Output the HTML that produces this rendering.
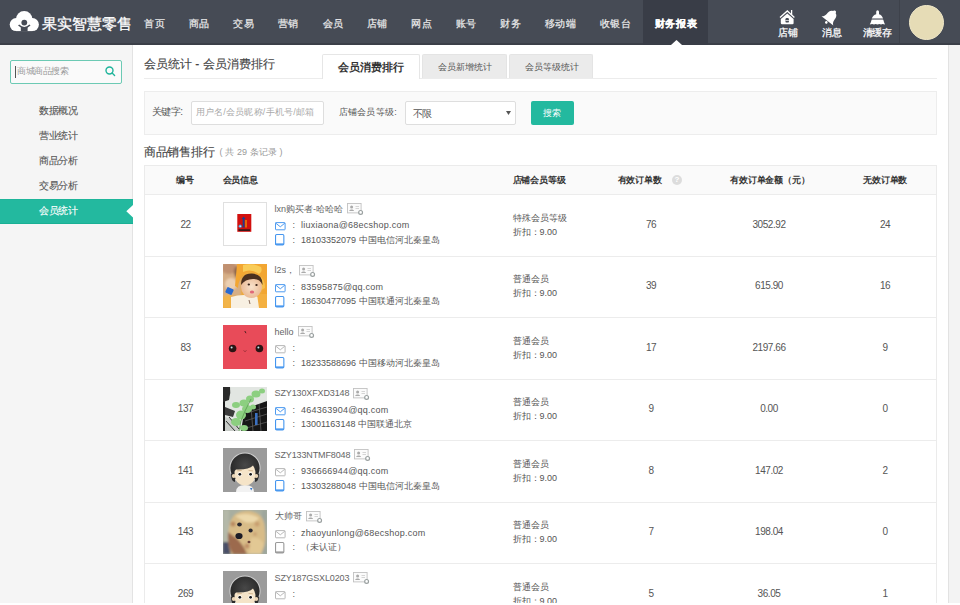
<!DOCTYPE html>
<html><head><meta charset="utf-8">
<style>
*{margin:0;padding:0;box-sizing:border-box}
html,body{width:960px;height:605px;overflow:hidden;background:#fff}
body{font-family:"Liberation Sans",sans-serif;position:relative;color:#555}
.a{position:absolute;white-space:nowrap}
#hdr{position:absolute;left:0;top:0;width:960px;height:45px;background:#464b55;border-bottom:2px solid #3b3f48}
.nav{position:absolute;top:17.5px;font-size:10px;line-height:12px;color:#ececec;letter-spacing:0.8px;-webkit-text-stroke:0.2px}
#side{position:absolute;left:0;top:45px;width:133px;height:558px;background:#f5f5f5;border-right:1px solid #e3e3e3}
.mi{position:absolute;left:39px;font-size:10px;line-height:12px;color:#555;letter-spacing:-0.4px;-webkit-text-stroke:0.12px}
#scroll{position:absolute;left:948px;top:45px;width:12px;height:558px;background:#f3f3f3;border-left:1px solid #e2e2e2}
#bot{position:absolute;left:0;top:603px;width:960px;height:2px;background:#fff}
.th{position:absolute;white-space:nowrap;font-size:9px;line-height:11px;font-weight:bold;color:#333;letter-spacing:-0.15px}
.td{position:absolute;white-space:nowrap;font-size:9px;line-height:12px;color:#555}
.c{text-align:center}
.nu{font-size:10px;letter-spacing:-0.45px}
.em{font-size:9px;color:#555;letter-spacing:0.24px}
.ph{color:#555}
.nm{position:absolute;white-space:nowrap;font-size:9px;line-height:12px;color:#666}
.cd{display:inline-block;vertical-align:top;margin-left:4px;margin-top:0.5px;letter-spacing:0}
.cd svg{display:block}
.ic{position:absolute}
.ic svg{display:block}
.av{position:absolute;width:44px;height:44px;overflow:hidden}
.av svg{display:block}
</style></head><body>
<div id="hdr">
  <svg class="a" style="left:0;top:0" width="45" height="40" viewBox="0 0 45 40">
    <circle cx="16.2" cy="24.6" r="6.5" fill="#fff"/><circle cx="24.2" cy="19.3" r="8.3" fill="#fff"/><circle cx="32.4" cy="24.6" r="6.5" fill="#fff"/><rect x="16" y="19" width="16.5" height="12.1" fill="#fff"/>
    <circle cx="24.3" cy="22.6" r="2.9" fill="#464b55"/><path d="M18.6 25 Q24.3 30.5 30 25" fill="none" stroke="#464b55" stroke-width="1.6"/><rect x="20.8" y="27.3" width="6.8" height="4" fill="#464b55"/>
  </svg>
  <div class="a" style="left:41.5px;top:14.5px;font-size:15px;line-height:18px;color:#fff;-webkit-text-stroke:0.3px">果实智慧零售</div>
  <div class="a" style="left:643px;top:0;width:65px;height:45px;background:#393d47"></div>
  <svg class="a" style="left:671px;top:40px" width="11" height="5" viewBox="0 0 11 5"><path d="M0 5 L5.5 0 L11 5Z" fill="#fff"/></svg>
  <div class="nav" style="left:144px">首页</div>
  <div class="nav" style="left:188.5px">商品</div>
  <div class="nav" style="left:233px">交易</div>
  <div class="nav" style="left:277.5px">营销</div>
  <div class="nav" style="left:322.5px">会员</div>
  <div class="nav" style="left:366.5px">店铺</div>
  <div class="nav" style="left:411px">网点</div>
  <div class="nav" style="left:455.5px">账号</div>
  <div class="nav" style="left:500px">财务</div>
  <div class="nav" style="left:544.5px">移动端</div>
  <div class="nav" style="left:599.5px">收银台</div>
  <div class="nav" style="left:654.5px;font-weight:bold;color:#fff">财务报表</div>
  <!-- right icons -->
  <svg class="a" style="left:770px;top:5px" width="120" height="22" viewBox="770 5 120 22">
    <path d="M780 17.6 L787.3 11 L794.4 17.6" fill="none" stroke="#fff" stroke-width="1.3"/>
    <path d="M791.6 10 L791.6 14.8" stroke="#fff" stroke-width="1.3"/>
    <path d="M787.3 13.4 L793.6 19 L793.6 23 Q793.6 24.2 792.4 24.2 L782 24.2 Q780.8 24.2 780.8 23 L780.8 19 Z" fill="#fff"/>
    <rect x="785.5" y="18" width="3.4" height="4.6" rx="1.2" fill="#464b55"/>
    <rect x="785.5" y="20" width="3.4" height="0.7" fill="#fff"/>
    <g transform="rotate(38 830.5 17)">
      <path d="M830.5 9.2 C831.8 9.2 832.2 10 832.2 10.8 C835 11.8 835.2 14.5 835.3 17 C835.4 19.5 836.5 21 838 22 L823 22 C824.5 21 825.6 19.5 825.7 17 C825.8 14.5 826 11.8 828.8 10.8 C828.8 10 829.2 9.2 830.5 9.2 Z" fill="#fff"/>
      <path d="M826 23 Q830.5 24.6 835 23" fill="none" stroke="#464b55" stroke-width="1.1"/>
      <circle cx="830.5" cy="23.8" r="1.3" fill="#fff"/>
    </g>
    <path d="M876.2 14.3 L876.2 11.8 Q876.2 10.3 877.6 10.3 Q879 10.3 879 11.8 L879 14.3 Q882 15 883 18.5 L871.8 18.5 Q873 15 876.2 14.3 Z" fill="#fff"/>
    <rect x="871.8" y="18.6" width="11.2" height="0.9" fill="#9a9ca2"/>
    <path d="M871.6 19.7 L883.3 19.7 Q884 22.5 885 24.5 Q882.5 23.8 881 24.4 Q879.5 23.8 877.5 24.4 Q875.5 23.8 874 24.4 Q872 23.8 869.8 24.5 Q871 22.5 871.6 19.7 Z" fill="#fff"/>
  </svg>
  <div class="a" style="left:778px;top:26.5px;font-size:10px;line-height:11px;color:#fff;letter-spacing:-0.4px;-webkit-text-stroke:0.25px">店铺</div>
  <div class="a" style="left:822px;top:26.5px;font-size:10px;line-height:11px;color:#fff;letter-spacing:-0.4px;-webkit-text-stroke:0.25px">消息</div>
  <div class="a" style="left:863px;top:26.5px;font-size:10px;line-height:11px;color:#fff;letter-spacing:-0.6px;-webkit-text-stroke:0.25px">清缓存</div>
  <div class="a" style="left:899px;top:0;width:1px;height:43px;background:#3e424b"></div>
  <div class="a" style="left:908.5px;top:4.5px;width:35px;height:35px;border-radius:50%;background:#e6dcb6;border:1px solid #f0e8c8"></div>
</div>

<div id="side">
  <div class="a" style="left:10px;top:14.5px;width:111.5px;height:24.5px;border:1.5px solid #6ccab4;border-radius:2px;background:#fafafa"></div>
  <div class="a" style="left:15px;top:20.5px;width:1px;height:12px;background:#555"></div>
  <div class="a" style="left:17px;top:19.5px;font-size:9px;line-height:12px;color:#999;letter-spacing:-0.5px">商城商品搜索</div>
  <svg class="a" style="left:104px;top:20px" width="13" height="13" viewBox="0 0 13 13">
    <circle cx="5.5" cy="5.5" r="3.5" fill="none" stroke="#1fb49b" stroke-width="1.4"/>
    <path d="M8.1 8.1 L10.6 10.6" stroke="#1fb49b" stroke-width="1.4" stroke-linecap="round"/>
  </svg>
  <div class="mi" style="top:60px">数据概况</div>
  <div class="mi" style="top:85px">营业统计</div>
  <div class="mi" style="top:110px">商品分析</div>
  <div class="mi" style="top:135px">交易分析</div>
  <div class="a" style="left:0;top:154px;width:133px;height:24.5px;background:#23b99f;border-top:1px solid #1eb59a;border-bottom:1px solid #19b094"></div>
  <svg class="a" style="left:126.3px;top:160.4px" width="7" height="12.6" viewBox="0 0 7 12.6"><path d="M7 0 L0.3 6.3 L7 12.6Z" fill="#fff"/></svg>
  <div class="mi" style="top:160px;color:#fff">会员统计</div>
</div>

<!-- main -->
<div class="a" style="left:144px;top:56.5px;font-size:12px;line-height:14px;color:#444;-webkit-text-stroke:0.12px">会员统计 - 会员消费排行</div>
<div class="a" style="left:144px;top:78px;width:793px;height:1px;background:#ececec"></div>
<div class="a" style="left:322px;top:54px;width:98px;height:25px;background:#fff;border:1px solid #e6e6e6;border-bottom:none;border-radius:2px 2px 0 0"></div>
<div class="a" style="left:338px;top:61px;font-size:11px;line-height:13px;color:#333;font-weight:bold">会员消费排行</div>
<div class="a" style="left:422px;top:54px;width:84.5px;height:24px;background:#ebebeb;border:1px solid #e4e4e4;border-bottom:none;border-radius:2px 2px 0 0"></div>
<div class="a" style="left:437.5px;top:62px;font-size:9px;line-height:11px;color:#555">会员新增统计</div>
<div class="a" style="left:508.5px;top:54px;width:84.5px;height:24px;background:#ebebeb;border:1px solid #e4e4e4;border-bottom:none;border-radius:2px 2px 0 0"></div>
<div class="a" style="left:525px;top:62px;font-size:9px;line-height:11px;color:#555">会员等级统计</div>

<div class="a" style="left:144px;top:91px;width:793px;height:44px;background:#fafafa;border:1px solid #ededed"></div>
<div class="a" style="left:151.5px;top:106px;font-size:10px;line-height:12px;color:#555;letter-spacing:-0.4px">关键字:</div>
<div class="a" style="left:190.5px;top:101px;width:133.5px;height:24px;background:#fff;border:1px solid #dedede;border-radius:2px"></div>
<div class="a" style="left:195.5px;top:106px;font-size:9px;line-height:12px;color:#aaa;letter-spacing:0.23px">用户名/会员昵称/手机号/邮箱</div>
<div class="a" style="left:338.5px;top:106px;font-size:9px;line-height:12px;color:#555;letter-spacing:0.28px">店铺会员等级:</div>
<div class="a" style="left:404.5px;top:101px;width:111px;height:24px;background:#fff;border:1px solid #dedede;border-radius:2px"></div>
<div class="a" style="left:412.5px;top:107.5px;font-size:10px;line-height:12px;color:#555;letter-spacing:-1px">不限</div>
<svg class="a" style="left:505.5px;top:111px" width="5" height="4" viewBox="0 0 5 4"><path d="M0 0 L5 0 L2.5 4Z" fill="#555"/></svg>
<div class="a" style="left:530.5px;top:101px;width:43px;height:24px;background:#23b99f;border-radius:2px"></div>
<div class="a" style="left:542.5px;top:106.5px;font-size:9px;line-height:12px;color:#fff;letter-spacing:0.6px">搜索</div>

<div class="a" style="left:144px;top:145px;font-size:12px;line-height:14px;color:#444;letter-spacing:-0.3px;-webkit-text-stroke:0.12px">商品销售排行</div>
<div class="a" style="left:219.5px;top:147px;font-size:9px;line-height:11px;color:#999;letter-spacing:0.1px">( 共 29 条记录 )</div>

<div id="tbl">
<div class="a" style="left:144px;top:165px;width:793px;height:439px;border:1px solid #ebebeb;border-bottom:none"></div>
<div class="a" style="left:145px;top:166px;width:791px;height:28px;background:#fafafa"></div>
<div class="th" style="left:175.8px;top:174.5px">编号</div>
<div class="th" style="left:222.5px;top:174.5px">会员信息</div>
<div class="th" style="left:512.5px;top:174.5px">店铺会员等级</div>
<div class="th" style="left:617.5px;top:174.5px">有效订单数</div>
<div class="a" style="left:672px;top:174.5px;width:10px;height:10px;border-radius:50%;background:#dcdcdc;color:#fff;font-size:8px;line-height:10px;text-align:center;font-weight:bold">?</div>
<div class="th" style="left:730px;top:174.5px">有效订单金额（元）</div>
<div class="th" style="left:863px;top:174.5px">无效订单数</div>
<div class="a" style="left:145px;top:194.0px;width:791px;height:1px;background:#ececec"></div>
<div class="td c nu" style="left:145px;width:81px;top:218.8px">22</div>
<div class="av" style="left:222.5px;top:202.0px"><svg width="44" height="44" viewBox="0 0 44 44"><rect x="0.5" y="0.5" width="43" height="43" fill="#fff" stroke="#e0e0e0"/>
<rect x="14.3" y="12" width="14" height="17.8" fill="#d2100e"/>
<path d="M20.6 14.6 L22.6 17 L21.5 17 L21.5 25.5 L19.7 25.5 L19.7 17 L18.6 17 Z" fill="#1b3f8f"/>
<path d="M22.5 18 L23.5 18 L23.5 25.5 L22.5 25.5Z" fill="#f5c000"/>
<circle cx="17.2" cy="24.2" r="1.6" fill="#3aa0e8"/><circle cx="17.2" cy="24.2" r="0.7" fill="#fff"/>
<rect x="15.5" y="27.3" width="11.5" height="1.6" fill="#2a1a1a"/></svg></div>
<div class="nm" style="left:274.5px;top:202.5px;letter-spacing:0">lxn购买者-哈哈哈<span class="cd"><svg width="17" height="12" viewBox="0 0 17 12"><rect x="0.5" y="0.5" width="13.6" height="9.4" fill="#fbfbfb" stroke="#c2c2c2" stroke-width="0.9"/><circle cx="4.6" cy="3.9" r="1.5" fill="#aaa"/><path d="M2.2 8 C2.4 6 6.8 6 7 8Z" fill="#aaa"/><rect x="8.5" y="3" width="3.5" height="0.8" fill="#ccc"/><rect x="8.5" y="5.2" width="3.5" height="0.8" fill="#ccc"/><circle cx="13.6" cy="9.4" r="1.9" fill="#fff" stroke="#9aa0a0" stroke-width="1.2"/></svg></span></div>
<div class="ic" style="left:275px;top:222.0px"><svg width="11" height="9" viewBox="0 0 11 9"><rect x="0.5" y="0.6" width="9.6" height="7.2" rx="0.6" fill="none" stroke="#4596ef" stroke-width="0.95"/><path d="M0.7 1.1 L5.3 4.8 L9.9 1.1" fill="none" stroke="#4596ef" stroke-width="0.95"/></svg></div>
<div class="td" style="left:292.5px;top:219.0px">:</div>
<div class="td em" style="left:301px;top:219.0px">liuxiaona@68ecshop.com</div>
<div class="ic" style="left:275px;top:234.0px"><svg width="10" height="12" viewBox="0 0 10 12"><rect x="0.55" y="0.55" width="8.3" height="10.3" rx="1.1" fill="none" stroke="#4596ef" stroke-width="1.1"/><rect x="0.55" y="9.4" width="8.3" height="1.5" fill="#4596ef"/></svg></div>
<div class="td" style="left:292.5px;top:233.5px">:</div>
<div class="td ph" style="left:301px;top:233.5px">18103352079 中国电信河北秦皇岛</div>
<div class="td" style="left:512.5px;top:211.5px">特殊会员等级</div>
<div class="td" style="left:512.5px;top:225.5px">折扣：9.00</div>
<div class="td c nu" style="left:601px;width:100px;top:218.8px">76</div>
<div class="td c nu" style="left:719px;width:100px;top:218.8px">3052.92</div>
<div class="td c nu" style="left:835px;width:100px;top:218.8px">24</div>
<div class="a" style="left:145px;top:255.5px;width:791px;height:1px;background:#ececec"></div>
<div class="td c nu" style="left:145px;width:81px;top:280.3px">27</div>
<div class="av" style="left:222.5px;top:263.5px"><svg width="44" height="44" viewBox="0 0 44 44"><defs>
<filter id="bl2" x="-20%" y="-20%" width="140%" height="140%"><feGaussianBlur stdDeviation="1.3"/></filter>
<filter id="bl2b" x="-20%" y="-20%" width="140%" height="140%"><feGaussianBlur stdDeviation="0.5"/></filter>
<radialGradient id="fc2" cx="0.5" cy="0.5" r="0.6"><stop offset="0" stop-color="#f8e2cc"/><stop offset="1" stop-color="#e8b48c"/></radialGradient></defs>
<rect width="44" height="44" fill="#eeaa3a"/>
<g filter="url(#bl2)">
<rect x="-2" y="-2" width="20" height="34" fill="#d6ae86"/>
<ellipse cx="6" cy="4" rx="8" ry="6" fill="#c09070"/>
<ellipse cx="15" cy="8" rx="4" ry="6" fill="#8a6448"/>
<ellipse cx="8" cy="20" rx="6" ry="6" fill="#ecd0b2"/>
<path d="M0 32 L8 30 L8 44 L0 44Z" fill="#f2b448"/>
</g>
<g filter="url(#bl2b)">
<path d="M14 0 L44 0 L44 44 L38 44 L40 20 Q36 6 24 8 Q16 12 15 24 L12 22Z" fill="#f2a632"/>
<path d="M20 1 Q30 -1 38 3 Q40 8 36 10 Q28 4 20 8Z" fill="#f9cc58"/>
<path d="M36 12 Q42 14 42 24 L38 26Z" fill="#f7c04c"/>
<path d="M8 33 Q20 29 36 33 L38 44 L8 44Z" fill="#f8f0e2"/>
<path d="M34 30 L44 30 L44 44 L36 44Z" fill="#f4b040"/>
</g>
<ellipse cx="28.5" cy="23" rx="10.5" ry="11" fill="url(#fc2)"/>
<path d="M18 21 Q18 9 29 9.5 Q40 10 39.5 21 Q37 14.5 30 15 Q22 15 18 21Z" fill="#4a3020"/>
<ellipse cx="25.8" cy="20.5" rx="1.2" ry="0.9" fill="#3a2418"/><ellipse cx="33.5" cy="21" rx="1.2" ry="0.9" fill="#3a2418"/>
<ellipse cx="29" cy="28" rx="2.2" ry="1.6" fill="#e06878"/>
<rect x="3" y="24" width="7" height="6" rx="1" transform="rotate(25 6.5 27)" fill="#2a6ad0"/>
<path d="M26 36 L27 40" stroke="#6a4a3a" stroke-width="0.8"/>
</svg></div>
<div class="nm" style="left:274.5px;top:264.0px;letter-spacing:0">l2s，<span class="cd"><svg width="17" height="12" viewBox="0 0 17 12"><rect x="0.5" y="0.5" width="13.6" height="9.4" fill="#fbfbfb" stroke="#c2c2c2" stroke-width="0.9"/><circle cx="4.6" cy="3.9" r="1.5" fill="#aaa"/><path d="M2.2 8 C2.4 6 6.8 6 7 8Z" fill="#aaa"/><rect x="8.5" y="3" width="3.5" height="0.8" fill="#ccc"/><rect x="8.5" y="5.2" width="3.5" height="0.8" fill="#ccc"/><circle cx="13.6" cy="9.4" r="1.9" fill="#fff" stroke="#9aa0a0" stroke-width="1.2"/></svg></span></div>
<div class="ic" style="left:275px;top:283.5px"><svg width="11" height="9" viewBox="0 0 11 9"><rect x="0.5" y="0.6" width="9.6" height="7.2" rx="0.6" fill="none" stroke="#4596ef" stroke-width="0.95"/><path d="M0.7 1.1 L5.3 4.8 L9.9 1.1" fill="none" stroke="#4596ef" stroke-width="0.95"/></svg></div>
<div class="td" style="left:292.5px;top:280.5px">:</div>
<div class="td em" style="left:301px;top:280.5px">83595875@qq.com</div>
<div class="ic" style="left:275px;top:295.5px"><svg width="10" height="12" viewBox="0 0 10 12"><rect x="0.55" y="0.55" width="8.3" height="10.3" rx="1.1" fill="none" stroke="#4596ef" stroke-width="1.1"/><rect x="0.55" y="9.4" width="8.3" height="1.5" fill="#4596ef"/></svg></div>
<div class="td" style="left:292.5px;top:295.0px">:</div>
<div class="td ph" style="left:301px;top:295.0px">18630477095 中国联通河北秦皇岛</div>
<div class="td" style="left:512.5px;top:273.0px">普通会员</div>
<div class="td" style="left:512.5px;top:287.0px">折扣：9.00</div>
<div class="td c nu" style="left:601px;width:100px;top:280.3px">39</div>
<div class="td c nu" style="left:719px;width:100px;top:280.3px">615.90</div>
<div class="td c nu" style="left:835px;width:100px;top:280.3px">16</div>
<div class="a" style="left:145px;top:317.0px;width:791px;height:1px;background:#ececec"></div>
<div class="td c nu" style="left:145px;width:81px;top:341.8px">83</div>
<div class="av" style="left:222.5px;top:325.0px"><svg width="44" height="44" viewBox="0 0 44 44"><rect width="44" height="44" fill="#e84b59"/>
<circle cx="9.6" cy="23.5" r="3.8" fill="#2a1414"/><circle cx="8.6" cy="22.4" r="1" fill="#bfe8f0"/>
<circle cx="36.4" cy="23.5" r="3.8" fill="#2a1414"/><circle cx="35.4" cy="22.4" r="1" fill="#bfe8f0"/>
<path d="M20.5 25.5 Q21.3 27 22 25.8 Q22.7 27 23.5 25.5" fill="none" stroke="#6a2024" stroke-width="0.6"/>
<path d="M21.8 6 L23 8.2" stroke="#3a1a1a" stroke-width="0.9"/></svg></div>
<div class="nm" style="left:274.5px;top:325.5px;letter-spacing:0">hello<span class="cd"><svg width="17" height="12" viewBox="0 0 17 12"><rect x="0.5" y="0.5" width="13.6" height="9.4" fill="#fbfbfb" stroke="#c2c2c2" stroke-width="0.9"/><circle cx="4.6" cy="3.9" r="1.5" fill="#aaa"/><path d="M2.2 8 C2.4 6 6.8 6 7 8Z" fill="#aaa"/><rect x="8.5" y="3" width="3.5" height="0.8" fill="#ccc"/><rect x="8.5" y="5.2" width="3.5" height="0.8" fill="#ccc"/><circle cx="13.6" cy="9.4" r="1.9" fill="#fff" stroke="#9aa0a0" stroke-width="1.2"/></svg></span></div>
<div class="ic" style="left:275px;top:345.0px"><svg width="11" height="9" viewBox="0 0 11 9"><rect x="0.5" y="0.6" width="9.6" height="7.2" rx="0.6" fill="none" stroke="#b4b4b4" stroke-width="0.95"/><path d="M0.7 1.1 L5.3 4.8 L9.9 1.1" fill="none" stroke="#b4b4b4" stroke-width="0.95"/></svg></div>
<div class="td" style="left:292.5px;top:342.0px">:</div>
<div class="ic" style="left:275px;top:357.0px"><svg width="10" height="12" viewBox="0 0 10 12"><rect x="0.55" y="0.55" width="8.3" height="10.3" rx="1.1" fill="none" stroke="#4596ef" stroke-width="1.1"/><rect x="0.55" y="9.4" width="8.3" height="1.5" fill="#4596ef"/></svg></div>
<div class="td" style="left:292.5px;top:356.5px">:</div>
<div class="td ph" style="left:301px;top:356.5px">18233588696 中国移动河北秦皇岛</div>
<div class="td" style="left:512.5px;top:334.5px">普通会员</div>
<div class="td" style="left:512.5px;top:348.5px">折扣：9.00</div>
<div class="td c nu" style="left:601px;width:100px;top:341.8px">17</div>
<div class="td c nu" style="left:719px;width:100px;top:341.8px">2197.66</div>
<div class="td c nu" style="left:835px;width:100px;top:341.8px">9</div>
<div class="a" style="left:145px;top:378.5px;width:791px;height:1px;background:#ececec"></div>
<div class="td c nu" style="left:145px;width:81px;top:403.3px">137</div>
<div class="av" style="left:222.5px;top:386.5px"><svg width="44" height="44" viewBox="0 0 44 44"><defs><filter id="bl4" x="-20%" y="-20%" width="140%" height="140%"><feGaussianBlur stdDeviation="0.7"/></filter></defs>
<rect width="44" height="44" fill="#e2e6e2"/>
<g filter="url(#bl4)">
<rect x="0" y="0" width="2" height="44" fill="#181818"/>
<path d="M0 0 L7 0 Q8 6 6 13 L0 15Z" fill="#2a2a2a"/>
<path d="M2 20 L12 24 L10 30 L2 28Z" fill="#3a3a3a"/>
<path d="M2 30 L14 34 L16 44 L2 44Z" fill="#c8ccc8"/>
<path d="M3 34 L12 44 M6 30 L16 42" stroke="#333" stroke-width="1"/>
<path d="M22 22 L44 14 L44 44 L18 44 L20 32Z" fill="#161616"/>
<path d="M24 26 L44 20 M22 34 L44 27 M20 42 L44 35 M28 20 L30 44 M36 17 L38 44" stroke="#666" stroke-width="0.7"/>
<rect x="32" y="26" width="2.6" height="12" fill="#3a70c0"/>
</g>
<g fill="#8ccf80" filter="url(#bl4)">
<ellipse cx="33" cy="7" rx="4.5" ry="3.5"/><ellipse cx="39" cy="4" rx="3" ry="2.5"/><ellipse cx="27" cy="12" rx="4" ry="3.5"/>
<ellipse cx="21" cy="16" rx="4.5" ry="3.5"/><ellipse cx="13" cy="18" rx="4" ry="3"/><ellipse cx="24" cy="22" rx="5" ry="4"/>
<ellipse cx="18" cy="28" rx="5" ry="4.5"/><ellipse cx="13" cy="35" rx="5" ry="4"/><ellipse cx="21" cy="41" rx="4" ry="3"/><ellipse cx="30" cy="20" rx="3" ry="2.5"/>
</g>
<path d="M28 12 L22 24 L18 34 L16 44" stroke="#5a9a50" stroke-width="0.8" fill="none"/>
</svg></div>
<div class="nm" style="left:274.5px;top:387.0px;letter-spacing:-0.12px">SZY130XFXD3148<span class="cd"><svg width="17" height="12" viewBox="0 0 17 12"><rect x="0.5" y="0.5" width="13.6" height="9.4" fill="#fbfbfb" stroke="#c2c2c2" stroke-width="0.9"/><circle cx="4.6" cy="3.9" r="1.5" fill="#aaa"/><path d="M2.2 8 C2.4 6 6.8 6 7 8Z" fill="#aaa"/><rect x="8.5" y="3" width="3.5" height="0.8" fill="#ccc"/><rect x="8.5" y="5.2" width="3.5" height="0.8" fill="#ccc"/><circle cx="13.6" cy="9.4" r="1.9" fill="#fff" stroke="#9aa0a0" stroke-width="1.2"/></svg></span></div>
<div class="ic" style="left:275px;top:406.5px"><svg width="11" height="9" viewBox="0 0 11 9"><rect x="0.5" y="0.6" width="9.6" height="7.2" rx="0.6" fill="none" stroke="#4596ef" stroke-width="0.95"/><path d="M0.7 1.1 L5.3 4.8 L9.9 1.1" fill="none" stroke="#4596ef" stroke-width="0.95"/></svg></div>
<div class="td" style="left:292.5px;top:403.5px">:</div>
<div class="td em" style="left:301px;top:403.5px">464363904@qq.com</div>
<div class="ic" style="left:275px;top:418.5px"><svg width="10" height="12" viewBox="0 0 10 12"><rect x="0.55" y="0.55" width="8.3" height="10.3" rx="1.1" fill="none" stroke="#4596ef" stroke-width="1.1"/><rect x="0.55" y="9.4" width="8.3" height="1.5" fill="#4596ef"/></svg></div>
<div class="td" style="left:292.5px;top:418.0px">:</div>
<div class="td ph" style="left:301px;top:418.0px">13001163148 中国联通北京</div>
<div class="td" style="left:512.5px;top:396.0px">普通会员</div>
<div class="td" style="left:512.5px;top:410.0px">折扣：9.00</div>
<div class="td c nu" style="left:601px;width:100px;top:403.3px">9</div>
<div class="td c nu" style="left:719px;width:100px;top:403.3px">0.00</div>
<div class="td c nu" style="left:835px;width:100px;top:403.3px">0</div>
<div class="a" style="left:145px;top:440.0px;width:791px;height:1px;background:#ececec"></div>
<div class="td c nu" style="left:145px;width:81px;top:464.8px">141</div>
<div class="av" style="left:222.5px;top:448.0px"><svg width="44" height="44" viewBox="0 0 44 44"><defs><radialGradient id="hr5" cx="0.5" cy="0.4" r="0.55"><stop offset="0" stop-color="#484848"/><stop offset="1" stop-color="#262626"/></radialGradient></defs>
<rect width="44" height="44" fill="#9b9b9b"/>
<path d="M13 44 Q13 37 22 37 Q31 37 31 44Z" fill="#f2f2f2"/>
<path d="M27 40 L29.5 40 L28.2 42.5Z" fill="#3a78c8"/>
<circle cx="22" cy="20" r="15.6" fill="#d0d0d0"/>
<circle cx="22" cy="20" r="14.6" fill="url(#hr5)"/>
<path d="M8 26 Q8 33 12 34 L12 24Z" fill="#2a2a2a"/><path d="M36 26 Q36 33 32 34 L32 24Z" fill="#2a2a2a"/>
<circle cx="10.8" cy="28" r="2" fill="#ead4b4"/><circle cx="33.2" cy="28" r="2" fill="#ead4b4"/>
<path d="M11.5 24 Q11.5 37 22 37.5 Q32.5 37 32.5 24 Q32 20 30 17.5 Q26 22 13 21.5 Q11.5 22.5 11.5 24Z" fill="#f5e4c8"/>
<circle cx="16.8" cy="26.3" r="2.1" fill="#fff"/><circle cx="16.8" cy="26.3" r="1.4" fill="#151515"/>
<circle cx="27.6" cy="26.3" r="2.1" fill="#fff"/><circle cx="27.6" cy="26.3" r="1.4" fill="#151515"/>
<path d="M14.2 22.8 L18.8 22.4" stroke="#c8a880" stroke-width="0.7"/><path d="M25.5 22.4 L30 22.8" stroke="#c8a880" stroke-width="0.7"/>
</svg></div>
<div class="nm" style="left:274.5px;top:448.5px;letter-spacing:-0.12px">SZY133NTMF8048<span class="cd"><svg width="17" height="12" viewBox="0 0 17 12"><rect x="0.5" y="0.5" width="13.6" height="9.4" fill="#fbfbfb" stroke="#c2c2c2" stroke-width="0.9"/><circle cx="4.6" cy="3.9" r="1.5" fill="#aaa"/><path d="M2.2 8 C2.4 6 6.8 6 7 8Z" fill="#aaa"/><rect x="8.5" y="3" width="3.5" height="0.8" fill="#ccc"/><rect x="8.5" y="5.2" width="3.5" height="0.8" fill="#ccc"/><circle cx="13.6" cy="9.4" r="1.9" fill="#fff" stroke="#9aa0a0" stroke-width="1.2"/></svg></span></div>
<div class="ic" style="left:275px;top:468.0px"><svg width="11" height="9" viewBox="0 0 11 9"><rect x="0.5" y="0.6" width="9.6" height="7.2" rx="0.6" fill="none" stroke="#b4b4b4" stroke-width="0.95"/><path d="M0.7 1.1 L5.3 4.8 L9.9 1.1" fill="none" stroke="#b4b4b4" stroke-width="0.95"/></svg></div>
<div class="td" style="left:292.5px;top:465.0px">:</div>
<div class="td em" style="left:301px;top:465.0px">936666944@qq.com</div>
<div class="ic" style="left:275px;top:480.0px"><svg width="10" height="12" viewBox="0 0 10 12"><rect x="0.55" y="0.55" width="8.3" height="10.3" rx="1.1" fill="none" stroke="#4596ef" stroke-width="1.1"/><rect x="0.55" y="9.4" width="8.3" height="1.5" fill="#4596ef"/></svg></div>
<div class="td" style="left:292.5px;top:479.5px">:</div>
<div class="td ph" style="left:301px;top:479.5px">13303288048 中国电信河北秦皇岛</div>
<div class="td" style="left:512.5px;top:457.5px">普通会员</div>
<div class="td" style="left:512.5px;top:471.5px">折扣：9.00</div>
<div class="td c nu" style="left:601px;width:100px;top:464.8px">8</div>
<div class="td c nu" style="left:719px;width:100px;top:464.8px">147.02</div>
<div class="td c nu" style="left:835px;width:100px;top:464.8px">2</div>
<div class="a" style="left:145px;top:501.5px;width:791px;height:1px;background:#ececec"></div>
<div class="td c nu" style="left:145px;width:81px;top:526.3px">143</div>
<div class="av" style="left:222.5px;top:509.5px"><svg width="44" height="44" viewBox="0 0 44 44"><defs><filter id="bl6" x="-20%" y="-20%" width="140%" height="140%"><feGaussianBlur stdDeviation="0.9"/></filter></defs>
<rect width="44" height="44" fill="#a8aea0"/>
<g filter="url(#bl6)">
<rect x="0" y="0" width="6" height="44" fill="#b4b8a8"/>
<rect x="0" y="32" width="8" height="12" fill="#485068"/>
<rect x="39" y="0" width="5" height="44" fill="#9ea69c"/>
<path d="M7 12 Q12 -1 28 1 Q42 4 42 20 Q44 34 38 44 L8 44 Q3 30 7 12Z" fill="#d8bc88"/>
<path d="M5 22 Q4 36 10 44 L24 44 Q20 34 13 28Z" fill="#9c6a4e"/>
<path d="M12 6 Q24 1 36 8 Q32 14 22 12Z" fill="#ecd8aa"/>
<path d="M28 28 Q36 26 41 34 L38 44 L26 44Z" fill="#e2c894"/>
<circle cx="10" cy="14" r="2.5" fill="#b88860"/><circle cx="34" cy="14" r="2.5" fill="#c89e70"/><circle cx="24" cy="36" r="2.5" fill="#c09068"/><circle cx="32" cy="24" r="2" fill="#caa274"/>
</g>
<ellipse cx="16.5" cy="14.6" rx="2.3" ry="2" fill="#2a2830"/>
<ellipse cx="27.6" cy="20.5" rx="2.1" ry="2" fill="#2a2830"/>
<ellipse cx="16" cy="26" rx="3.6" ry="3.1" fill="#1c1c26"/>
<ellipse cx="26" cy="32" rx="1.5" ry="1.2" fill="#6a4038"/>
</svg></div>
<div class="nm" style="left:274.5px;top:510.0px;letter-spacing:0">大帅哥<span class="cd"><svg width="17" height="12" viewBox="0 0 17 12"><rect x="0.5" y="0.5" width="13.6" height="9.4" fill="#fbfbfb" stroke="#c2c2c2" stroke-width="0.9"/><circle cx="4.6" cy="3.9" r="1.5" fill="#aaa"/><path d="M2.2 8 C2.4 6 6.8 6 7 8Z" fill="#aaa"/><rect x="8.5" y="3" width="3.5" height="0.8" fill="#ccc"/><rect x="8.5" y="5.2" width="3.5" height="0.8" fill="#ccc"/><circle cx="13.6" cy="9.4" r="1.9" fill="#fff" stroke="#9aa0a0" stroke-width="1.2"/></svg></span></div>
<div class="ic" style="left:275px;top:529.5px"><svg width="11" height="9" viewBox="0 0 11 9"><rect x="0.5" y="0.6" width="9.6" height="7.2" rx="0.6" fill="none" stroke="#b4b4b4" stroke-width="0.95"/><path d="M0.7 1.1 L5.3 4.8 L9.9 1.1" fill="none" stroke="#b4b4b4" stroke-width="0.95"/></svg></div>
<div class="td" style="left:292.5px;top:526.5px">:</div>
<div class="td em" style="left:301px;top:526.5px">zhaoyunlong@68ecshop.com</div>
<div class="ic" style="left:275px;top:541.5px"><svg width="10" height="12" viewBox="0 0 10 12"><rect x="0.55" y="0.55" width="8.3" height="10.3" rx="1.1" fill="none" stroke="#9a9a9a" stroke-width="1.1"/><rect x="0.55" y="9.4" width="8.3" height="1.5" fill="#9a9a9a"/></svg></div>
<div class="td" style="left:292.5px;top:541.0px">:</div>
<div class="td ph" style="left:301px;top:541.0px">（未认证）</div>
<div class="td" style="left:512.5px;top:519.0px">普通会员</div>
<div class="td" style="left:512.5px;top:533.0px">折扣：9.00</div>
<div class="td c nu" style="left:601px;width:100px;top:526.3px">7</div>
<div class="td c nu" style="left:719px;width:100px;top:526.3px">198.04</div>
<div class="td c nu" style="left:835px;width:100px;top:526.3px">0</div>
<div class="a" style="left:145px;top:563.0px;width:791px;height:1px;background:#ececec"></div>
<div class="td c nu" style="left:145px;width:81px;top:587.8px">269</div>
<div class="av" style="left:222.5px;top:571.0px"><svg width="44" height="44" viewBox="0 0 44 44"><defs><radialGradient id="hr5" cx="0.5" cy="0.4" r="0.55"><stop offset="0" stop-color="#484848"/><stop offset="1" stop-color="#262626"/></radialGradient></defs>
<rect width="44" height="44" fill="#9b9b9b"/>
<path d="M13 44 Q13 37 22 37 Q31 37 31 44Z" fill="#f2f2f2"/>
<path d="M27 40 L29.5 40 L28.2 42.5Z" fill="#3a78c8"/>
<circle cx="22" cy="20" r="15.6" fill="#d0d0d0"/>
<circle cx="22" cy="20" r="14.6" fill="url(#hr5)"/>
<path d="M8 26 Q8 33 12 34 L12 24Z" fill="#2a2a2a"/><path d="M36 26 Q36 33 32 34 L32 24Z" fill="#2a2a2a"/>
<circle cx="10.8" cy="28" r="2" fill="#ead4b4"/><circle cx="33.2" cy="28" r="2" fill="#ead4b4"/>
<path d="M11.5 24 Q11.5 37 22 37.5 Q32.5 37 32.5 24 Q32 20 30 17.5 Q26 22 13 21.5 Q11.5 22.5 11.5 24Z" fill="#f5e4c8"/>
<circle cx="16.8" cy="26.3" r="2.1" fill="#fff"/><circle cx="16.8" cy="26.3" r="1.4" fill="#151515"/>
<circle cx="27.6" cy="26.3" r="2.1" fill="#fff"/><circle cx="27.6" cy="26.3" r="1.4" fill="#151515"/>
<path d="M14.2 22.8 L18.8 22.4" stroke="#c8a880" stroke-width="0.7"/><path d="M25.5 22.4 L30 22.8" stroke="#c8a880" stroke-width="0.7"/>
</svg></div>
<div class="nm" style="left:274.5px;top:571.5px;letter-spacing:-0.12px">SZY187GSXL0203<span class="cd"><svg width="17" height="12" viewBox="0 0 17 12"><rect x="0.5" y="0.5" width="13.6" height="9.4" fill="#fbfbfb" stroke="#c2c2c2" stroke-width="0.9"/><circle cx="4.6" cy="3.9" r="1.5" fill="#aaa"/><path d="M2.2 8 C2.4 6 6.8 6 7 8Z" fill="#aaa"/><rect x="8.5" y="3" width="3.5" height="0.8" fill="#ccc"/><rect x="8.5" y="5.2" width="3.5" height="0.8" fill="#ccc"/><circle cx="13.6" cy="9.4" r="1.9" fill="#fff" stroke="#9aa0a0" stroke-width="1.2"/></svg></span></div>
<div class="ic" style="left:275px;top:591.0px"><svg width="11" height="9" viewBox="0 0 11 9"><rect x="0.5" y="0.6" width="9.6" height="7.2" rx="0.6" fill="none" stroke="#b4b4b4" stroke-width="0.95"/><path d="M0.7 1.1 L5.3 4.8 L9.9 1.1" fill="none" stroke="#b4b4b4" stroke-width="0.95"/></svg></div>
<div class="td" style="left:292.5px;top:588.0px">:</div>
<div class="ic" style="left:275px;top:603.0px"><svg width="10" height="12" viewBox="0 0 10 12"><rect x="0.55" y="0.55" width="8.3" height="10.3" rx="1.1" fill="none" stroke="#9a9a9a" stroke-width="1.1"/><rect x="0.55" y="9.4" width="8.3" height="1.5" fill="#9a9a9a"/></svg></div>
<div class="td" style="left:292.5px;top:602.5px">:</div>
<div class="td" style="left:512.5px;top:580.5px">普通会员</div>
<div class="td" style="left:512.5px;top:594.5px">折扣：9.00</div>
<div class="td c nu" style="left:601px;width:100px;top:587.8px">5</div>
<div class="td c nu" style="left:719px;width:100px;top:587.8px">36.05</div>
<div class="td c nu" style="left:835px;width:100px;top:587.8px">1</div>
</div><!--/tbl-->

<div id="scroll"></div>
<div id="bot"></div>
</body></html>
